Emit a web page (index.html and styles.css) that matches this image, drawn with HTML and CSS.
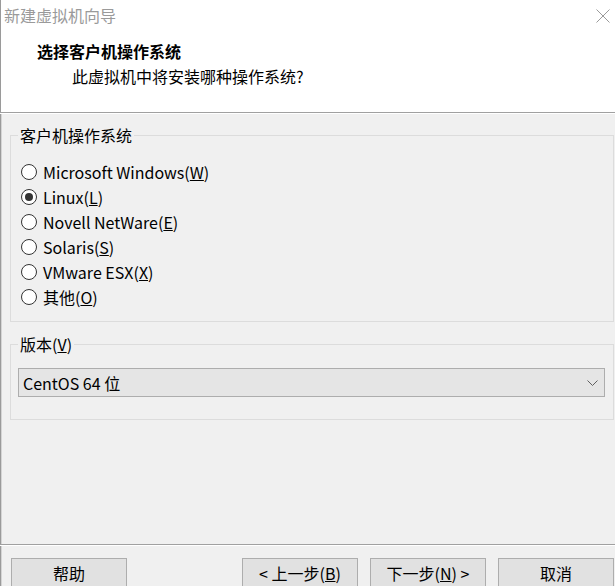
FILE: index.html
```html
<!DOCTYPE html>
<html lang="zh-CN">
<head>
<meta charset="utf-8">
<title>新建虚拟机向导</title>
<link rel="stylesheet" href="styles.css">
</head>
<body>
<div class="window">
  <header class="header">
    <div class="titlebar">
      <span class="title">新建虚拟机向导</span>
      <svg class="close" width="14" height="14" viewBox="0 0 14 14"><path d="M0.5 0.5 L13.5 13.5 M13.5 0.5 L0.5 13.5" stroke="#9a9a9a" stroke-width="1" fill="none"/></svg>
    </div>
    <div class="heading">选择客户机操作系统</div>
    <div class="subtitle">此虚拟机中将安装哪种操作系统?</div>
  </header>
  <main class="main">
    <fieldset class="group group-os">
      <legend class="legend">客户机操作系统</legend>
      <div class="radios">
        <div class="radio"><span class="dot"></span><span>Microsoft Windows(<u>W</u>)</span></div>
        <div class="radio checked"><span class="dot"></span><span>Linux(<u>L</u>)</span></div>
        <div class="radio"><span class="dot"></span><span>Novell NetWare(<u>E</u>)</span></div>
        <div class="radio"><span class="dot"></span><span>Solaris(<u>S</u>)</span></div>
        <div class="radio"><span class="dot"></span><span>VMware ESX(<u>X</u>)</span></div>
        <div class="radio"><span class="dot"></span><span>其他(<u>O</u>)</span></div>
      </div>
    </fieldset>
    <fieldset class="group group-ver">
      <legend class="legend">版本(<u>V</u>)</legend>
      <div class="combo">
        <span class="combo-text">CentOS 64 位</span>
        <svg class="chev" width="11" height="6" viewBox="0 0 11 6"><path d="M0.5 0.5 L5.5 5.5 L10.5 0.5" stroke="#606060" stroke-width="1" fill="none"/></svg>
      </div>
    </fieldset>
  </main>
  <footer class="footer">
    <button class="btn">帮助</button>
    <div class="btn-group">
      <button class="btn">&lt; 上一步(<u>B</u>)</button>
      <button class="btn">下一步(<u>N</u>) &gt;</button>
      <button class="btn">取消</button>
    </div>
  </footer>
</div>
</body>
</html>
```
FILE: styles.css
```css
* { box-sizing: border-box; }
html, body { margin: 0; padding: 0; }
body {
  font-family: "Noto Sans CJK SC", "Noto Sans", sans-serif;
  font-size: 16px;
  color: #000;
  background: #f0f0f0;
}
.window {
  width: 615px;
  height: 586px;
  background: #f0f0f0;
  box-shadow: inset 1px 0 0 #9a9a9a, inset 2px 0 0 #d4d4d4;
  display: flex;
  flex-direction: column;
  overflow: hidden;
}
.header {
  height: 113px;
  background: #fff;
  border-bottom: 1px solid #a0a0a0;
  box-shadow: inset 1px 0 0 #9a9a9a, 0 1px 0 #fff;
  flex: none;
}
.titlebar {
  height: 30px;
  display: flex;
  align-items: center;
  justify-content: space-between;
  padding: 0 5px 0 4px;
}
.title {
  color: #9a9a9a;
  line-height: 20px;
}
.close { display: block; margin-top: 1px; }
.heading {
  font-weight: bold;
  margin-left: 37px;
  margin-top: 10px;
  line-height: 22px;
}
.subtitle {
  margin-left: 72px;
  margin-top: 3px;
  line-height: 22px;
}
.main {
  flex: 1;
  padding: 12px 1px 0 10px;
}
.group {
  margin: 0;
  padding: 0;
  border: 1px solid #dcdcdc;
  min-width: 0;
}
.legend {
  margin-left: 7px;
  padding: 0 2px;
  line-height: 20px;
}
.group-os { padding: 14px 0 12px 0; }
.radios { display: flex; flex-direction: column; padding-left: 10px; }
.radio {
  height: 25px;
  display: flex;
  align-items: center;
  gap: 6px;
  line-height: 20px;
}
.dot {
  width: 16px;
  height: 16px;
  border: 1px solid #333;
  border-radius: 50%;
  background: #fff;
  display: flex;
  align-items: center;
  justify-content: center;
  flex: none;
}
.radio.checked .dot::after {
  content: "";
  width: 8px;
  height: 8px;
  border-radius: 50%;
  background: #333;
}
.group-ver {
  margin-top: 12px;
  padding: 14px 8px 22px 7px;
}
.group-ver .legend { margin-left: 0; }
.combo {
  height: 29px;
  border: 1px solid #adadad;
  background: #e5e5e5;
  display: flex;
  align-items: center;
  justify-content: space-between;
  padding: 0 6px 0 4px;
}
.combo-text { line-height: 20px; }
.chev { display: block; }
.footer {
  height: 42px;
  flex: none;
  border-top: 1px solid #a0a0a0;
  box-shadow: inset 0 1px 0 #fff;
  display: flex;
  justify-content: space-between;
  padding: 13px 1px 0 11px;
}
.btn-group { display: flex; gap: 12px; }
.btn {
  width: 116px;
  height: 29px;
  border: 1px solid #adadad;
  background: #e1e1e1;
  font-family: inherit;
  font-size: 16px;
  color: #000;
  padding: 0;
  line-height: 20px;
}
```
